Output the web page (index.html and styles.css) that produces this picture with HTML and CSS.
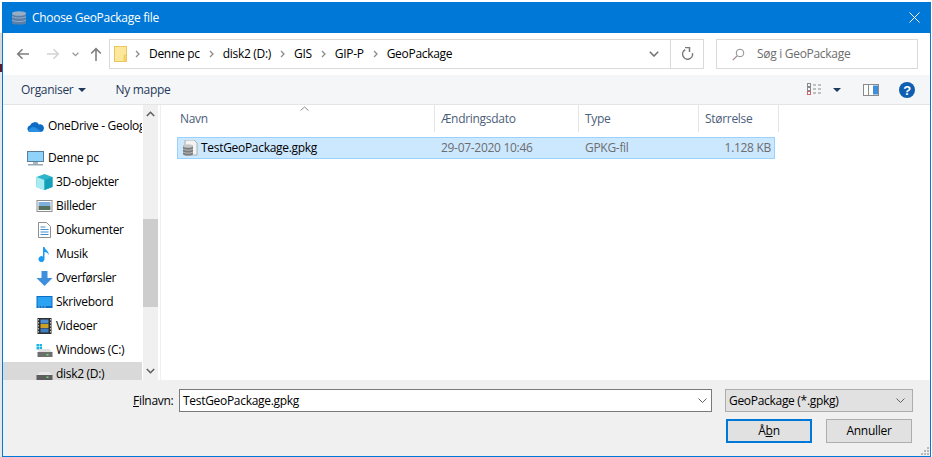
FILE: index.html
```html
<!DOCTYPE html>
<html lang="da">
<head>
<meta charset="utf-8">
<title>Choose GeoPackage file</title>
<link rel="stylesheet" href="styles.css">
</head>
<body>
<div class="strip"></div>
<div class="window">
  <header class="titlebar">
    <svg class="title-icon" width="16" height="16" viewBox="0 0 16 16"><path d="M1 3.500C1 1.500 15 1.500 15 3.500V13C15 15.200 1 15.200 1 13Z" fill="#5a7fa8"/><ellipse cx="8" cy="3.500" rx="7" ry="2.300" fill="#98adc6"/><path d="M1 6.500C3 8.600 13 8.600 15 6.500M1 10C3 12 13 12 15 10" fill="none" stroke="#98adc6" stroke-width="1"/></svg>
    <span class="title-text">Choose GeoPackage file</span>
    <svg class="close-icon" width="11" height="11" viewBox="0 0 11 11"><path d="M.5.5l10 10M10.500.5l-10 10" stroke="#fff" stroke-width="1" fill="none"/></svg>
  </header>
  <nav class="addressbar">
    <svg class="nav-icon first" width="14" height="12" viewBox="0 0 14 12"><path d="M13 6H2M6.500 1.200L1.700 6l4.800 4.800" stroke="#7f7f7f" stroke-width="1.600" fill="none"/></svg>
    <svg class="nav-icon second" width="14" height="12" viewBox="0 0 14 12"><path d="M1 6h11M7.500 1.200L12.300 6l-4.800 4.800" stroke="#d4d4d4" stroke-width="1.600" fill="none"/></svg>
    <svg class="nav-icon third" width="7" height="5" viewBox="0 0 7 5"><path d="M.6.8L3.500 3.600 6.400.8" stroke="#9a9a9a" stroke-width="1.300" fill="none"/></svg>
    <svg class="nav-icon fourth" width="12" height="14" viewBox="0 0 12 14"><path d="M6 14V2M1.200 6.500L6 1.700l4.800 4.800" stroke="#7f7f7f" stroke-width="1.600" fill="none"/></svg>
    <div class="path-box">
      <svg class="folder-icon" width="13" height="16" viewBox="0 0 13 16"><rect x=".5" y=".5" width="12" height="15" fill="#fde79a" stroke="#eac75c"/><rect x="10" y="9" width="2.500" height="6.500" fill="#f6d36b" stroke="#eac75c" stroke-width=".6"/></svg>
      <svg class="crumb-sep" width="5" height="8" viewBox="0 0 5 8"><path d="M1 1l3 3-3 3" stroke="#8a8a8a" stroke-width="1.300" fill="none"/></svg>
      <span class="crumb">Denne pc</span>
      <svg class="crumb-sep" width="5" height="8" viewBox="0 0 5 8"><path d="M1 1l3 3-3 3" stroke="#8a8a8a" stroke-width="1.300" fill="none"/></svg>
      <span class="crumb">disk2 (D:)</span>
      <svg class="crumb-sep" width="5" height="8" viewBox="0 0 5 8"><path d="M1 1l3 3-3 3" stroke="#8a8a8a" stroke-width="1.300" fill="none"/></svg>
      <span class="crumb">GIS</span>
      <svg class="crumb-sep" width="5" height="8" viewBox="0 0 5 8"><path d="M1 1l3 3-3 3" stroke="#8a8a8a" stroke-width="1.300" fill="none"/></svg>
      <span class="crumb">GIP-P</span>
      <svg class="crumb-sep" width="5" height="8" viewBox="0 0 5 8"><path d="M1 1l3 3-3 3" stroke="#8a8a8a" stroke-width="1.300" fill="none"/></svg>
      <span class="crumb">GeoPackage</span>
      <span class="path-dropdown"><svg width="10" height="6" viewBox="0 0 10 6"><path d="M.8.8L5 5 9.200.8" stroke="#6f6f6f" stroke-width="1.500" fill="none"/></svg></span>
      <span class="path-refresh"><svg width="13" height="14" viewBox="0 0 13 14"><path d="M2.600 3.800A5 5 0 1 0 10.500 4.500" stroke="#7a7a7a" stroke-width="1.500" fill="none" transform="rotate(20 6.500 8)"/><path d="M4 .5h4.500V5" stroke="#7a7a7a" stroke-width="1.500" fill="none"/></svg></span>
    </div>
    <div class="search-box">
      <svg width="13" height="13" viewBox="0 0 13 13"><circle cx="8" cy="5" r="3.800" stroke="#8d8d8d" fill="none"/><path d="M5 8L.8 12.200" stroke="#a58d8d" stroke-width="1.200"/></svg>
      <span>Søg i GeoPackage</span>
    </div>
  </nav>
  <div class="toolbar">
    <span class="tool-item">Organiser</span>
    <span class="tool-arrow"></span>
    <span class="tool-item new-folder">Ny mappe</span>
    <span class="tool-spacer"></span>
    <svg class="view-icon" width="16" height="13" viewBox="0 0 16 13"><g fill="none" stroke="#8a8a8a"><rect x=".5" y=".5" width="3" height="3"/><rect x=".5" y="4.500" width="3" height="3"/><rect x=".5" y="8.500" width="3" height="3" stroke="#c46a6a"/><path d="M6 2h3M11 2h3M6 6h3M11 6h3M6 10h3M11 10h3"/></g></svg>
    <span class="tool-arrow view-arrow"></span>
    <svg class="pane-icon" width="16" height="12" viewBox="0 0 16 12"><rect x=".5" y=".5" width="15" height="11" fill="#fff" stroke="#8a8a8a"/><rect x="5" y="1" width="1" height="10" fill="#8a8a8a"/><rect x="10" y="1.500" width="5" height="9" fill="#3d8fdc"/></svg>
    <svg class="help-icon" width="16" height="16" viewBox="0 0 16 16"><circle cx="8" cy="8" r="8" fill="#0f5fb0"/><text x="8" y="12.500" text-anchor="middle" class="help-mark">?</text></svg>
  </div>
  <main class="content">
    <aside class="sidebar">
      <div class="tree">
        <div class="tree-row top onedrive">
          <svg width="17" height="11" viewBox="0 0 17 11"><path d="M3.500 11A3.300 3.300 0 0 1 3 4.500 5 5 0 0 1 12 3.500 3.800 3.800 0 0 1 16.800 8 3.200 3.200 0 0 1 14 11Z" fill="#0f6cc4"/><path d="M1 10c2-4 6-5 8-3l6 4H3.500Z" fill="#2a8fe0"/></svg>
          <span>OneDrive - Geolog</span>
        </div>
        <div class="tree-row top">
          <svg width="17" height="15" viewBox="0 0 17 15"><rect x=".5" y=".5" width="16" height="10" fill="#8fd3fb" stroke="#5b7d98"/><rect x="6" y="11" width="5" height="2" fill="#a9b6c2"/><rect x="1" y="13" width="15" height="1.500" fill="#9aa8b4"/></svg>
          <span>Denne pc</span>
        </div>
        <div class="tree-row">
          <svg width="16" height="16" viewBox="0 0 16 16"><path d="M8 0l8 3v10l-8 3-8-3V3Z" fill="#2fb6c9"/><path d="M0 3l8 3v10l-8-3Z" fill="#a6ecf2"/><path d="M8 6l8-3v10l-8 3Z" fill="#15a0ba"/></svg>
          <span>3D-objekter</span>
        </div>
        <div class="tree-row">
          <svg width="16" height="12" viewBox="0 0 16 12"><rect x=".5" y=".5" width="15" height="11" fill="#fff" stroke="#8f8f8f"/><rect x="2" y="2" width="12" height="4" fill="#7fb0dc"/><rect x="2" y="6" width="12" height="4" fill="#55705f"/></svg>
          <span>Billeder</span>
        </div>
        <div class="tree-row">
          <svg width="13" height="16" viewBox="0 0 13 16"><path d="M.5.5h8l4 4v11H.5Z" fill="#fff" stroke="#8f8f8f"/><path d="M2.500 5h5M2.500 7.500h8M2.500 10h8M2.500 12.500h8" stroke="#3c8fd0"/></svg>
          <span>Dokumenter</span>
        </div>
        <div class="tree-row">
          <svg width="12" height="16" viewBox="0 0 12 16"><path d="M4.500 1h1.500c.5 3 5 4 4 8-.5-2-2-3-4-3v7a3 3 0 1 1-1.500-2.500Z" fill="#1c9bf0"/></svg>
          <span>Musik</span>
        </div>
        <div class="tree-row">
          <svg width="16" height="15" viewBox="0 0 16 15"><path d="M5 0h6v7h5l-8 8-8-8h5Z" fill="#3d8fdc"/></svg>
          <span>Overførsler</span>
        </div>
        <div class="tree-row">
          <svg width="16" height="12" viewBox="0 0 16 12"><rect width="16" height="12" fill="#0b6fc4"/><rect x="1" y="1" width="14" height="9" fill="#2aa3f2"/><path d="M2 11h1M5 11h1M8 11h1" stroke="#d8ecfb"/></svg>
          <span>Skrivebord</span>
        </div>
        <div class="tree-row">
          <svg width="14" height="16" viewBox="0 0 14 16"><rect width="14" height="16" fill="#2e2e2e"/><path d="M1 1v14M13 1v14" stroke="#bbb" stroke-dasharray="1.500 1.500"/><rect x="3" y="1.500" width="8" height="4" fill="#4f8fd0"/><rect x="3" y="6" width="8" height="4" fill="#c9a227"/><rect x="3" y="10.500" width="8" height="4" fill="#3f7cc0"/></svg>
          <span>Videoer</span>
        </div>
        <div class="tree-row">
          <svg width="16" height="14" viewBox="0 0 16 14"><path d="M0 1h2.500v2.500H0ZM3 1h2.500v2.500H3ZM0 4h2.500v2.500H0ZM3 4h2.500v2.500H3Z" fill="#19b5e8"/><path d="M3 6h10l3 4H1Z" fill="#e0e0e0"/><rect x="1" y="9" width="15" height="5" fill="#6e6e6e"/><rect x="10" y="11" width="2" height="1.500" fill="#6be06b"/></svg>
          <span>Windows (C:)</span>
        </div>
        <div class="tree-row selected">
          <svg width="16" height="14" viewBox="0 0 16 14"><path d="M3 5h10l3 4H0Z" fill="#e8e8e8"/><rect y="8" width="16" height="6" fill="#5d5d5d"/><rect x="10" y="9.500" width="2" height="1.500" fill="#6be06b"/></svg>
          <span>disk2 (D:)</span>
        </div>
      </div>
      <div class="side-scroll">
        <svg class="scroll-btn" width="9" height="6" viewBox="0 0 9 6"><path d="M.8 5L4.500 1.300 8.200 5" stroke="#606060" stroke-width="1.600" fill="none"/></svg>
        <div class="scroll-track"><div class="scroll-thumb"></div></div>
        <svg class="scroll-btn" width="9" height="6" viewBox="0 0 9 6"><path d="M.8 1L4.500 4.700 8.200 1" stroke="#606060" stroke-width="1.600" fill="none"/></svg>
      </div>
    </aside>
    <section class="files">
      <svg class="sort-arrow" width="9" height="5" viewBox="0 0 9 5"><path d="M.5 4.500L4.500 1l4 3.500" stroke="#8a8a8a" fill="none"/></svg>
      <div class="file-head">
        <span class="col col-name">Navn</span>
        <span class="col col-date">Ændringsdato</span>
        <span class="col col-type">Type</span>
        <span class="col col-size">Størrelse</span>
      </div>
      <div class="file-row">
        <span class="cell-name">
          <svg width="16" height="17" viewBox="0 0 16 17"><path d="M3 0h9l3 3v12H3Z" fill="#f3f3f3" stroke="#a0a0a0" stroke-width=".8"/><path d="M1 6C1 4.500 11 4.500 11 6v8c0 2-10 2-10 0Z" fill="#7c7c7c"/><ellipse cx="6" cy="6" rx="5" ry="1.800" fill="#c6c6c6"/><path d="M1 9c2 1.600 8 1.600 10 0M1 12c2 1.600 8 1.600 10 0" stroke="#c6c6c6" fill="none" stroke-width=".8"/></svg>
          <span>TestGeoPackage.gpkg</span>
        </span>
        <span class="cell cell-date">29-07-2020 10:46</span>
        <span class="cell cell-type">GPKG-fil</span>
        <span class="cell cell-size">1.128 KB</span>
      </div>
    </section>
  </main>
  <footer class="footer">
    <div class="footer-line">
      <label class="file-label"><u>F</u>ilnavn:</label>
      <div class="file-input">
        <span class="field-text">TestGeoPackage.gpkg</span>
        <svg width="9" height="5" viewBox="0 0 9 5"><path d="M.5.5l4 4 4-4" stroke="#606060" fill="none"/></svg>
      </div>
      <div class="file-type">
        <span class="field-text">GeoPackage (*.gpkg)</span>
        <svg width="9" height="5" viewBox="0 0 9 5"><path d="M.5.5l4 4 4-4" stroke="#606060" fill="none"/></svg>
      </div>
    </div>
    <div class="footer-buttons">
      <button class="btn btn-primary">Å<u>b</u>n</button>
      <button class="btn">Annuller</button>
    </div>
    <svg class="grip" width="9" height="9" viewBox="0 0 9 9"><path d="M7 1h2v2H7ZM4 4h2v2H4ZM7 4h2v2H7ZM1 7h2v2H1ZM4 7h2v2H4ZM7 7h2v2H7Z" fill="#b8b8b8"/></svg>
  </footer>
</div>
</body>
</html>
```
FILE: styles.css
```css
* { box-sizing: border-box; }
html, body { margin: 0; height: 457px; overflow: hidden; }
body {
  display: flex;
  padding: 2px 1px 0 0;
  background: #fff;
  font: 12px/16px "Open Sans", "Noto Sans", sans-serif;
  letter-spacing: -.3px;
  color: #000;
}
.strip {
  width: 2px;
  margin-top: -2px;
  background: linear-gradient(#fff 0 33px, #d8d8d8 33px 64px, #5a1a2a 64px 72px, #e8e8e8 72px 100%);
}
.window {
  width: 929px;
  display: flex;
  flex-direction: column;
  border: solid #0078d7;
  border-width: 0 1px 1px 1px;
  background: #fff;
}
.titlebar {
  height: 31px;
  flex: none;
  display: flex;
  align-items: center;
  padding: 0 10px 0 8px;
  background: #0078d7;
  color: #fff;
}
.title-text { margin-left: 5px; flex: 1; }
.addressbar {
  height: 42px;
  flex: none;
  display: flex;
  align-items: center;
  padding: 0 12px 0 0;
  background: #fff;
}
.nav-icon { flex: none; }
.first { margin-left: 13px; }
.second { margin-left: 16px; }
.third { margin-left: 12px; }
.fourth { margin: 0 0 0 11px; }
.path-box {
  width: 595px;
  height: 30px;
  margin-left: 7px;
  display: flex;
  align-items: center;
  border: 1px solid #d9d9d9;
  padding-left: 4px;
  color: #000;
}
.folder-icon { margin-right: 8px; }
.crumb-sep { flex: none; }
.crumb { margin: 0 9px; }
.path-dropdown {
  margin-left: auto;
  width: 34px;
  height: 100%;
  display: flex;
  align-items: center;
  justify-content: center;
  border-right: 1px solid #d9d9d9;
}
.path-refresh {
  width: 32px;
  height: 100%;
  display: flex;
  align-items: center;
  justify-content: center;
}
.search-box {
  width: 202px;
  height: 30px;
  margin-left: 12px;
  display: flex;
  align-items: center;
  gap: 12px;
  padding-left: 15px;
  border: 1px solid #d9d9d9;
  color: #6d6d6d;
}
.toolbar {
  height: 30px;
  flex: none;
  display: flex;
  align-items: center;
  padding: 0 15px 0 18px;
  background: #f5f6f7;
  color: #1e395b;
  border-bottom: 1px solid #e5e5e5;
}
.tool-arrow {
  width: 0;
  height: 0;
  margin-left: 5px;
  border: solid transparent;
  border-width: 4px 4px 0;
  border-top-color: #1e395b;
}
.new-folder { margin-left: 29px; }
.tool-spacer { flex: 1; }
.view-arrow { margin-left: 10px; }
.pane-icon { margin-left: 22px; }
.help-icon { margin-left: 20px; }
.help-mark { font: bold 13px "Liberation Sans", sans-serif; fill: #fff; }
.content {
  flex: 1;
  min-height: 0;
  display: flex;
  background: #fff;
}
.sidebar {
  width: 155px;
  flex: none;
  display: flex;
  overflow: hidden;
}
.tree {
  width: 139px;
  flex: none;
  padding-top: 9px;
  overflow: hidden;
}
.tree-row {
  height: 24px;
  display: flex;
  align-items: center;
  padding-left: 33px;
  white-space: nowrap;
  overflow: hidden;
}
.tree-row svg { flex: none; width: 17px; margin-right: 3px; }
.tree-row.top { padding-left: 24px; margin-bottom: 8px; }
.tree-row.top svg { margin-right: 4px; }
.tree-row.top + .tree-row.top { margin-bottom: 0; }
.selected { background: #d9d9d9; }
.side-scroll {
  width: 15px;
  margin-left: 1px;
  flex: none;
  display: flex;
  flex-direction: column;
  align-items: center;
  background: #f0f0f0;
}
.scroll-btn { flex: none; margin: 6px 0; }
.scroll-track { flex: 1; width: 100%; padding-top: 96px; }
.scroll-thumb { height: 88px; background: #cdcdcd; }
.files {
  flex: 1;
  margin-left: 2px;
  position: relative;
  border-left: 1px solid #f0f0f0;
  display: flex;
  flex-direction: column;
}
.sort-arrow { position: absolute; left: 139px; top: 1px; }
.file-head {
  height: 27px;
  flex: none;
  display: flex;
  margin-bottom: 5px;
}
.col {
  display: flex;
  align-items: center;
  padding-left: 6px;
  color: #4c607a;
  border-right: 1px solid #e5e5e5;
}
.col-name { width: 274px; padding-left: 19px; }
.col-date { width: 144px; }
.col-type { width: 120px; }
.col-size { width: 80px; }
.file-row {
  width: 598px;
  height: 22px;
  margin-left: 16px;
  display: flex;
  align-items: center;
  background: #cce8ff;
  border: 1px solid #99d1ff;
  color: #6d6d6d;
}
.cell-name {
  width: 257px;
  flex: none;
  display: flex;
  align-items: center;
  gap: 3px;
  padding-left: 4px;
  color: #000;
}
.cell-date { width: 144px; flex: none; padding-left: 6px; }
.cell-type { width: 120px; flex: none; padding-left: 6px; }
.cell-size { flex: 1; text-align: right; padding-right: 3px; }
.footer {
  height: 76px;
  flex: none;
  position: relative;
  background: #f0f0f0;
  padding-top: 9px;
}
.footer-line {
  display: flex;
  align-items: center;
  padding-left: 130px;
}
.file-label { width: 46px; padding-top: 1px; }
.file-input, .file-type {
  height: 23px;
  display: flex;
  align-items: center;
  justify-content: space-between;
  padding: 0 4px 0 3px;
}
.field-text { padding-top: 1px; }
.file-input {
  width: 533px;
  background: #fff;
  border: 1px solid #7a7a7a;
}
.file-type {
  width: 188px;
  margin-left: 13px;
  background: #e1e1e1;
  border: 1px solid #adadad;
  padding-right: 7px;
}
.footer-buttons {
  display: flex;
  justify-content: flex-end;
  gap: 14px;
  margin-top: 7px;
  padding-right: 18px;
}
.btn {
  width: 86px;
  height: 24px;
  padding: 0;
  background: #e1e1e1;
  border: 1px solid #adadad;
  font: inherit;
  letter-spacing: inherit;
  color: #000;
}
.btn-primary { border: 2px solid #0078d7; }
.grip { position: absolute; right: 1px; bottom: 1px; }
```
